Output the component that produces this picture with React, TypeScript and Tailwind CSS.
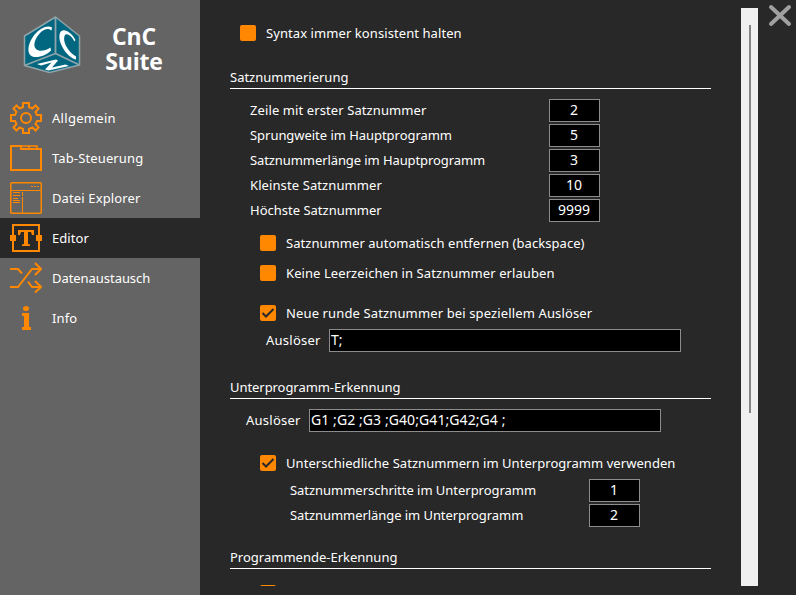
import type { ReactNode } from "react";

function Logo() {
  return (
    <svg width="58" height="60" viewBox="0 0 58 60" className="shrink-0">
      <g stroke="#8fa3a8" strokeWidth="1.5" strokeLinejoin="round" fill="#016781">
        <path d="M32.5 2L56.5 21V50L26.5 57.5L1.500 50.500V21Z" />
        <path d="M32.500 2V38.500M32.500 38.500L1.500 50.500M32.500 38.500L56.500 50" fill="none" strokeWidth="1.800" />
      </g>
      <g fill="#fff">
        <path d="M29 12.500C24 9.500 15 14 9.500 22.500C3.500 32 4 42 12.500 42C19 42 24 39.500 28 35.500L27.500 32.500C22 36 16 37 13 34C9.500 30.500 12 23 17.500 17.500C21 14 25.500 12.500 28.500 15.500Z" />
        <path d="M52.500 25C48 16 39 12 37 18C34 26 43 42 53 44.500V41.500C45 37 39.500 27 41.500 21C43 17 48.500 20.500 51.500 26.500Z" />
        <path d="M14 49L33 44.500L35 45.500L29 52.500L42.500 49.500L46 51L25.500 55.500L22 54.500L28.500 47.500L18 50.500Z" />
      </g>
    </svg>
  );
}

function GearIcon() {
  return (
    <svg width="32" height="32" viewBox="0 0 32 32" fill="none" stroke="#ff8800" strokeWidth="2">
      <path d="M13 1H19V5L22.500 6.500L25.500 3.500L28.500 6.500L25.500 10L27 13H31V19H27L25.500 22L28.500 25.500L25.500 28.500L22.500 25.500L19 27V31H13V27L9.500 25.500L6.500 28.500L3.500 25.500L6.500 22L5 19H1V13H5L6.500 10L3.500 6.500L6.500 3.500L9.500 6.500L13 5Z" />
      <circle cx="16" cy="16" r="5" />
    </svg>
  );
}

function TabsIcon() {
  return (
    <svg width="32" height="32" viewBox="0 0 32 32" fill="none" stroke="#ff8800" strokeWidth="2">
      <path d="M1 4H11V7H31V28H1Z" />
      <path d="M11 4H27V7M19 4V7" strokeWidth="1.500" />
    </svg>
  );
}

function ExplorerIcon() {
  return (
    <svg width="32" height="32" viewBox="0 0 32 32" fill="none" stroke="#ff8800">
      <rect x=".75" y=".75" width="30.500" height="30.500" rx="1" strokeWidth="1.500" />
      <path d="M1 8.500H31M12.500 10V14M12.500 15V31M3 10.500H10M3 13.500H10M3 16.500H8M3 18.500H10M3 20.500H10M21 4.500H23M24 4.500H26M27 4.500H29" />
    </svg>
  );
}

function EditorIcon() {
  return (
    <svg width="32" height="32" viewBox="0 0 32 32" fill="#ff8800">
      <path d="M2 2H30V13H32V19H30V30H2V19H0V13H2ZM4 4V13H6V19H4V28H28V19H26V13H28V4Z" fillRule="evenodd" />
      <path d="M8 8H24V13H22L21 10H18V22L20 22.500V24H12V22.500L14 22V10H11L10 13H8Z" />
    </svg>
  );
}

function ShuffleIcon() {
  return (
    <svg width="32" height="32" viewBox="0 0 32 32" fill="none" stroke="#ff8800" strokeWidth="2">
      <path d="M0 7H8L12 11.500M18 19.500L22 25H31M0 25H8L22 7H31M25 1L31 7L25 13M25 19L31 25L25 30.500" />
    </svg>
  );
}

function InfoIcon() {
  return (
    <svg width="32" height="32" viewBox="0 0 32 32" fill="#ff8800">
      <ellipse cx="16" cy="6.500" rx="3" ry="2.500" />
      <path d="M12 11H19V25H21V28H12V25H14V14H12Z" />
    </svg>
  );
}

const navigation = [
  { label: "Allgemein", icon: <GearIcon />, tracking: "tracking-[0.3px]" },
  { label: "Tab-Steuerung", icon: <TabsIcon />, tracking: "tracking-[0.13px]" },
  { label: "Datei Explorer", icon: <ExplorerIcon />, tracking: "tracking-[0.13px]" },
  { label: "Editor", icon: <EditorIcon />, tracking: "tracking-[0.05px]", active: true },
  { label: "Datenaustausch", icon: <ShuffleIcon />, tracking: "tracking-[-0.05px]" },
  { label: "Info", icon: <InfoIcon />, tracking: "tracking-[0.1px]" },
];

function Heading({ children, className = "" }: { children: ReactNode; className?: string }) {
  return (
    <h2 className={`flex h-[23px] w-[481px] shrink-0 items-center border-b border-white pb-px ${className}`}>
      <span>{children}</span>
    </h2>
  );
}

function Check({ children, checked = false, className = "" }: { children: ReactNode; checked?: boolean; className?: string }) {
  return (
    <label className={`flex h-[30px] shrink-0 items-center gap-[10px] ${className}`}>
      <span className="flex size-4 shrink-0 items-center justify-center rounded-[2px] bg-[#ff8800]">
        {checked && (
          <svg width="16" height="16" viewBox="0 0 16 16" fill="none" stroke="#282828" strokeWidth="2">
            <path d="M2.500 8L6 11.500L13.500 4" />
          </svg>
        )}
      </span>
      <span>{children}</span>
    </label>
  );
}

function NumberRow({ label, value, className = "ml-[20px]" }: { label: string; value: string; className?: string }) {
  return (
    <div className={`flex h-[25px] w-[350px] shrink-0 items-center justify-between ${className}`}>
      <span className="pb-[2px]">{label}</span>
      <span className="flex h-[23px] w-[51px] items-center justify-center border border-[#8c8c8c] bg-black pr-px pb-[2px] text-[14px] tracking-normal">{value}</span>
    </div>
  );
}

function TriggerRow({ value, className }: { value: string; className: string }) {
  return (
    <div className={`flex h-[25px] shrink-0 items-center ${className}`}>
      <span className="w-[63px] pb-[2px] tracking-[0.25px]">Auslöser</span>
      <span className="flex h-[23px] w-[352px] items-center border border-[#8c8c8c] bg-black pb-[2px] pl-px text-[14px] tracking-[0.08px] whitespace-pre">{value}</span>
    </div>
  );
}

export default function App() {
  return (
    <div className="flex h-[595px] w-[796px] overflow-hidden bg-[#282828] font-['Noto_Sans','Open_Sans',sans-serif] text-[13px] leading-[18px] whitespace-nowrap text-white">
      <aside className="w-[200px] shrink-0 bg-[#646464]">
        <header className="flex h-[98px] pt-[15px] pl-[23px]">
          <Logo />
          <h1 className="mt-[9px] w-[106px] text-center font-['Open_Sans'] text-[23px] leading-[25px] font-bold tracking-[-0.2px]">
            <span className="block">CnC</span>
            <span className="block">Suite</span>
          </h1>
        </header>
        <nav>
          {navigation.map((item) => (
            <div key={item.label} className={`flex h-10 items-center gap-[10px] pl-[10px] ${item.active ? "bg-[#282828]" : ""}`}>
              {item.icon}
              <span className={item.tracking}>{item.label}</span>
            </div>
          ))}
        </nav>
      </aside>
      <main className="ml-[30px] flex h-[586px] w-[511px] shrink-0 flex-col overflow-hidden pt-[18px]">
        <Check className="ml-[10px] tracking-[0.08px]">Syntax immer konsistent halten</Check>
        <Heading className="mt-[18px]">Satznummerierung</Heading>
        <div className="mt-[9px] shrink-0">
          <NumberRow label="Zeile mit erster Satznummer" value="2" className="ml-[20px] tracking-[0.1px]" />
          <NumberRow label="Sprungweite im Hauptprogramm" value="5" className="ml-[20px] tracking-[-0.04px]" />
          <NumberRow label="Satznummerlänge im Hauptprogramm" value="3" className="ml-[20px] tracking-[-0.09px]" />
          <NumberRow label="Kleinste Satznummer" value="10" className="ml-[20px] tracking-[0.1px]" />
          <NumberRow label="Höchste Satznummer" value="9999" />
        </div>
        <Check className="mt-[5px] ml-[30px] tracking-[0.05px]">Satznummer automatisch entfernen (backspace)</Check>
        <Check className="ml-[30px] tracking-[0.08px]">Keine Leerzeichen in Satznummer erlauben</Check>
        <Check checked className="mt-[10px] ml-[30px] tracking-[0.13px]">Neue runde Satznummer bei speziellem Auslöser</Check>
        <TriggerRow value="T;" className="ml-[36px]" />
        <Heading className="mt-[23px] tracking-[-0.06px]">Unterprogramm-Erkennung</Heading>
        <TriggerRow value="G1 ;G2 ;G3 ;G40;G41;G42;G4 ;" className="mt-[9px] ml-[16px]" />
        <Check checked className="mt-[15px] ml-[30px] tracking-[0.05px]">Unterschiedliche Satznummern im Unterprogramm verwenden</Check>
        <NumberRow label="Satznummerschritte im Unterprogramm" value="1" className="ml-[60px] tracking-[-0.03px]" />
        <NumberRow label="Satznummerlänge im Unterprogramm" value="2" className="ml-[60px] tracking-[-0.06px]" />
        <Heading className="mt-[18px]">Programmende-Erkennung</Heading>
        <div className="mt-4 ml-[30px] h-4 w-4 shrink-0 rounded-[2px] bg-[#ff8800]" />
      </main>
      <div className="mt-2 flex h-[578px] w-[17px] shrink-0 justify-center bg-[#f0f0f0] pt-[17px]">
        <div className="ml-px h-[388px] w-[2px] bg-[#858585]" />
      </div>
      <button className="mt-[4px] ml-[10px] size-6" aria-label="Schließen">
        <svg width="24" height="24" viewBox="0 0 24 24" stroke="#a0a0a0" strokeWidth="4" strokeLinecap="round">
          <path d="M3 3L21 20M21 3L3 20" />
        </svg>
      </button>
    </div>
  );
}
